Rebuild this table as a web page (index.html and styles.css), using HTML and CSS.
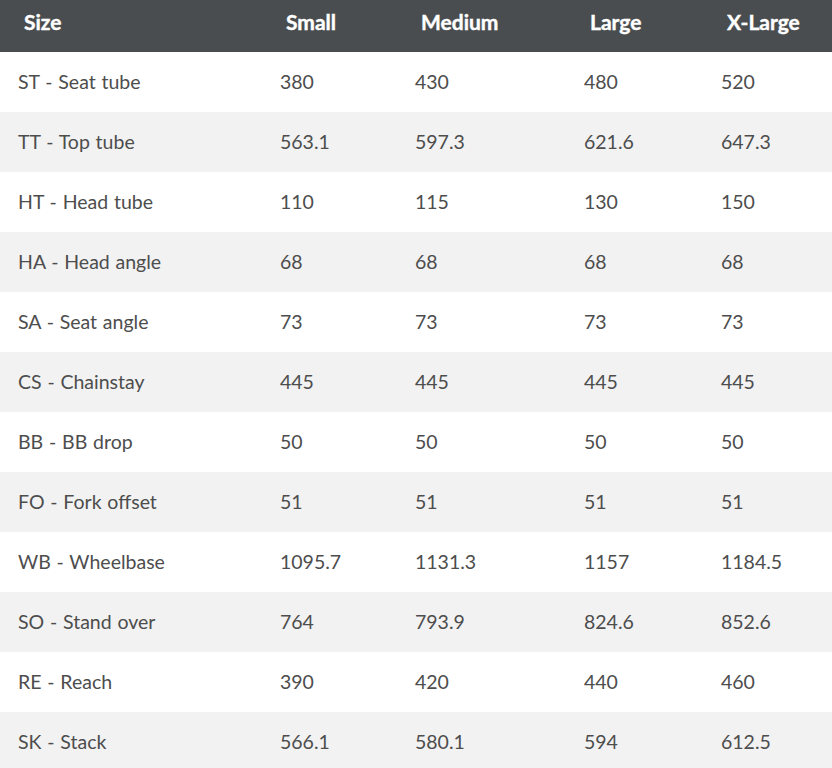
FILE: index.html
```html
<!DOCTYPE html>
<html>
<head>
<meta charset="utf-8">
<link rel="stylesheet" href="styles.css">
</head>
<body>
<table class="geo">
  <colgroup>
    <col class="c1"><col class="c2"><col class="c3"><col class="c4"><col class="c5">
  </colgroup>
  <thead>
    <tr><th>Size</th><th>Small</th><th>Medium</th><th>Large</th><th>X-Large</th></tr>
  </thead>
  <tbody>
    <tr><td>ST - Seat tube</td><td>380</td><td>430</td><td>480</td><td>520</td></tr>
    <tr><td>TT - Top tube</td><td>563.1</td><td>597.3</td><td>621.6</td><td>647.3</td></tr>
    <tr><td>HT - Head tube</td><td>110</td><td>115</td><td>130</td><td>150</td></tr>
    <tr><td>HA - Head angle</td><td>68</td><td>68</td><td>68</td><td>68</td></tr>
    <tr><td>SA - Seat angle</td><td>73</td><td>73</td><td>73</td><td>73</td></tr>
    <tr><td>CS - Chainstay</td><td>445</td><td>445</td><td>445</td><td>445</td></tr>
    <tr><td>BB - BB drop</td><td>50</td><td>50</td><td>50</td><td>50</td></tr>
    <tr><td>FO - Fork offset</td><td>51</td><td>51</td><td>51</td><td>51</td></tr>
    <tr><td>WB - Wheelbase</td><td>1095.7</td><td>1131.3</td><td>1157</td><td>1184.5</td></tr>
    <tr><td>SO - Stand over</td><td>764</td><td>793.9</td><td>824.6</td><td>852.6</td></tr>
    <tr><td>RE - Reach</td><td>390</td><td>420</td><td>440</td><td>460</td></tr>
    <tr><td>SK - Stack</td><td>566.1</td><td>580.1</td><td>594</td><td>612.5</td></tr>
  </tbody>
</table>
</body>
</html>
```
FILE: styles.css
```css
html, body {
  margin: 0;
  padding: 0;
  background: #ffffff;
}
.geo {
  width: 832px;
  border-collapse: collapse;
  table-layout: fixed;
  font-family: Lato, "Liberation Sans", sans-serif;
}
.c1 { width: 262px; }
.c2 { width: 135px; }
.c3 { width: 169px; }
.c4 { width: 137px; }
.c5 { width: 129px; }
.geo thead tr {
  background: #4a4d50;
  height: 52px;
}
.geo th {
  color: #ffffff;
  font-weight: 700;
  font-size: 21px;
  text-align: left;
  padding: 0 0 10px 24px;
  vertical-align: middle;
  -webkit-text-stroke: 0.4px #ffffff;
}
.geo tbody tr {
  height: 60px;
  background: #ffffff;
}
.geo tbody tr:nth-child(even) {
  background: #f2f2f2;
}
.geo td {
  color: #4d4d4d;
  font-size: 19.5px;
  word-spacing: 0.8px;
  padding: 0 0 1px 18px;
  vertical-align: middle;
}
```
